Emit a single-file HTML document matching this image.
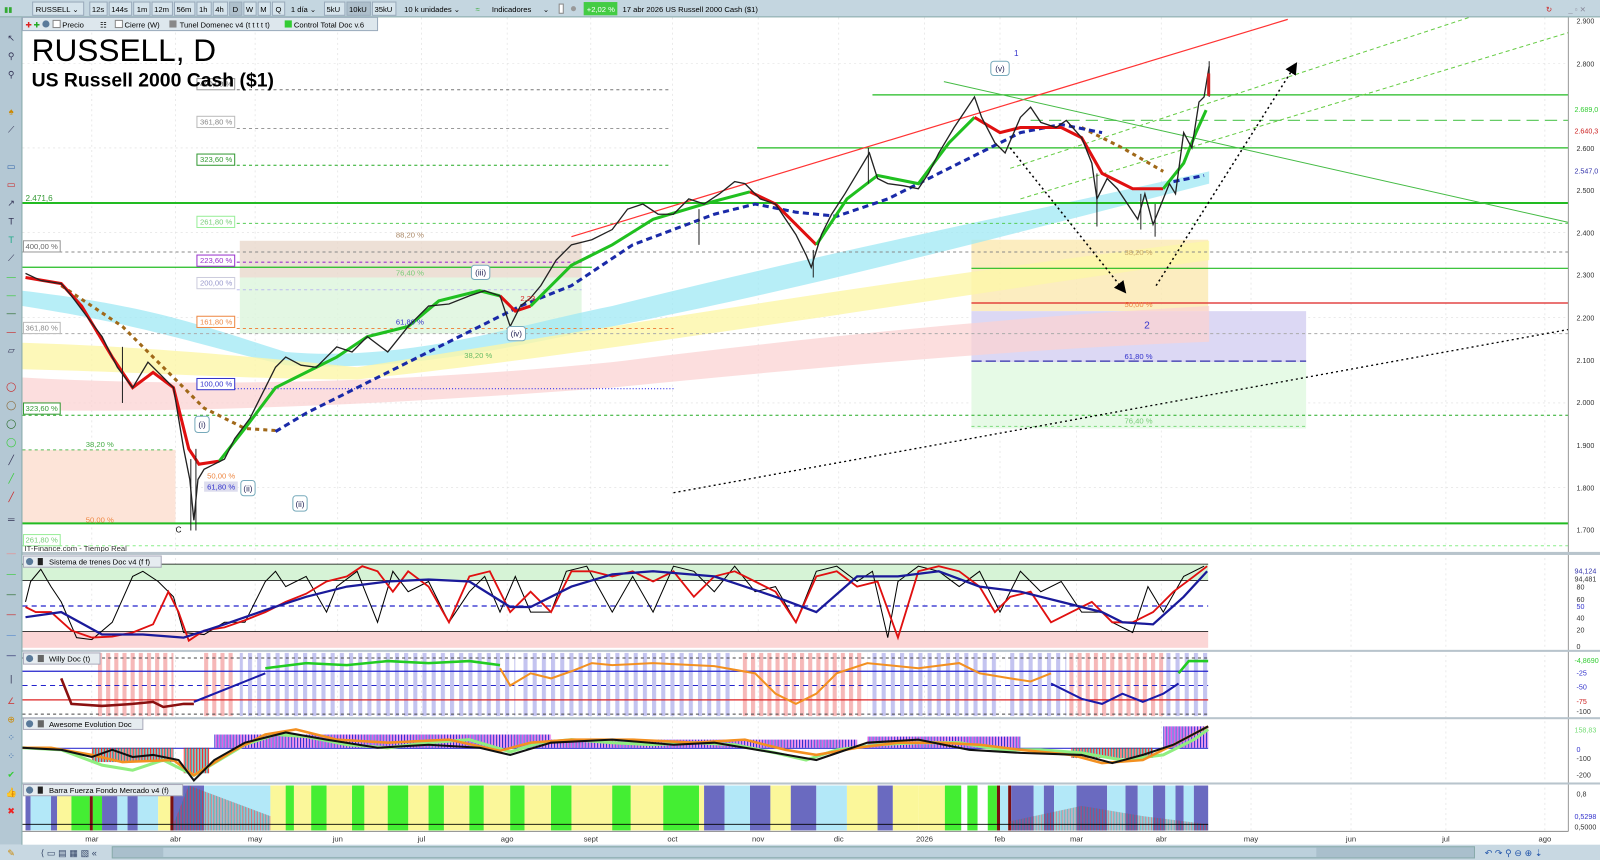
<!DOCTYPE html>
<html><head><meta charset="utf-8"><style>
html,body{margin:0;padding:0;background:#fff;overflow:hidden}
svg{display:block;font-family:"Liberation Sans",sans-serif}
</style></head><body>
<svg width="1600" height="860" viewBox="0 0 1568 843" preserveAspectRatio="none" xmlns="http://www.w3.org/2000/svg">
<defs>
<pattern id="wl" width="9" height="10" patternUnits="userSpaceOnUse"><rect x="0" width="4" height="10" fill="#c4c4f0"/></pattern>
<pattern id="wp" width="8" height="10" patternUnits="userSpaceOnUse"><rect x="0" width="4" height="10" fill="#f6b8b8"/></pattern>
<pattern id="hb" width="3" height="10" patternUnits="userSpaceOnUse"><rect width="1" height="10" fill="#2222cc"/><rect x="1.5" width="1" height="10" fill="#e040e0"/></pattern>
<pattern id="hr" width="3" height="10" patternUnits="userSpaceOnUse"><rect width="1" height="10" fill="#e22"/><rect x="1.5" width="1" height="10" fill="#188"/></pattern>
<marker id="ar" markerWidth="8" markerHeight="8" refX="4" refY="4" orient="auto"><path d="M0,0L8,4L0,8z" fill="#000"/></marker>
</defs>
<rect width="1568" height="843" fill="#fff"/>
<!-- grid -->
<g stroke="#ddd" stroke-dasharray="2,3" stroke-width="0.6">
<line x1="90" y1="17" x2="90" y2="815"/><line x1="172" y1="17" x2="172" y2="815"/><line x1="250" y1="17" x2="250" y2="815"/><line x1="331" y1="17" x2="331" y2="815"/><line x1="413" y1="17" x2="413" y2="815"/><line x1="497" y1="17" x2="497" y2="815"/><line x1="579" y1="17" x2="579" y2="815"/><line x1="659" y1="17" x2="659" y2="815"/><line x1="743" y1="17" x2="743" y2="815"/><line x1="822" y1="17" x2="822" y2="815"/><line x1="906" y1="17" x2="906" y2="815"/><line x1="980" y1="17" x2="980" y2="815"/><line x1="1055" y1="17" x2="1055" y2="815"/><line x1="1138" y1="17" x2="1138" y2="815"/><line x1="1226" y1="17" x2="1226" y2="815"/><line x1="1324" y1="17" x2="1324" y2="815"/><line x1="1417" y1="17" x2="1417" y2="815"/><line x1="1514" y1="17" x2="1514" y2="815"/>
<line x1="22" y1="62" x2="1537" y2="62"/><line x1="22" y1="145" x2="1537" y2="145"/><line x1="22" y1="228" x2="1537" y2="228"/><line x1="22" y1="311" x2="1537" y2="311"/><line x1="22" y1="395" x2="1537" y2="395"/><line x1="22" y1="478" x2="1537" y2="478"/>
</g>
<!-- fib boxes -->
<rect x="235" y="236" width="335" height="36" fill="#e8d8cc" opacity="0.8"/>
<rect x="235" y="272" width="335" height="55" fill="#dcf5dc" opacity="0.8"/>
<rect x="952" y="235" width="232" height="70" fill="#fbe8b0" opacity="0.8"/>
<rect x="952" y="305" width="328" height="50" fill="#dcd8f4"/>
<rect x="952" y="355" width="328" height="65" fill="#e6fae6"/>
<rect x="22" y="441" width="150" height="72" fill="#fde4d8"/>
<!-- bands -->
<path d="M22,285 C150,300 200,320 280,345 C400,355 500,320 600,300 C800,250 950,220 1185,168 L1185,180 C950,240 800,280 600,320 C500,340 400,365 280,358 C200,340 150,320 22,300z" fill="#9fe8f4" opacity="0.75"/>
<path d="M22,336 C150,340 250,350 350,360 C600,320 900,270 1185,236 L1185,255 C900,295 600,345 350,372 C250,372 150,365 22,362z" fill="#fdf6a8" opacity="0.8"/>
<path d="M22,370 C200,380 400,375 600,355 C800,330 1000,310 1185,300 L1185,335 C1000,342 800,360 600,380 C400,395 200,405 22,402z" fill="#fbd3d3" opacity="0.75"/>
<!-- horizontal levels -->
<g stroke-width="1.2">
<line x1="22" y1="199" x2="1537" y2="199" stroke="#22bb22" stroke-width="2"/>
<line x1="22" y1="513" x2="1537" y2="513" stroke="#22bb22" stroke-width="2"/>
<line x1="855" y1="93" x2="1537" y2="93" stroke="#22bb22"/>
<line x1="742" y1="145" x2="1537" y2="145" stroke="#22bb22"/>
<line x1="952" y1="263" x2="1537" y2="263" stroke="#22bb22"/>
<line x1="22" y1="262" x2="580" y2="262" stroke="#22bb22"/>
<line x1="952" y1="297" x2="1537" y2="297" stroke="#dd2222"/>
<line x1="1010" y1="118" x2="1537" y2="118" stroke="#66cc66" stroke-dasharray="12,6"/>
<line x1="952" y1="354" x2="1280" y2="354" stroke="#3333aa" stroke-dasharray="10,4"/>
</g>
<g stroke-dasharray="3,3" stroke-width="1">
<line x1="232" y1="88" x2="658" y2="88" stroke="#777"/>
<line x1="232" y1="126" x2="658" y2="126" stroke="#999"/>
<line x1="232" y1="162" x2="658" y2="162" stroke="#22aa22"/>
<line x1="232" y1="219" x2="1537" y2="219" stroke="#55cc55"/>
<line x1="22" y1="247" x2="1537" y2="247" stroke="#888"/>
<line x1="232" y1="257" x2="570" y2="257" stroke="#9933cc"/>
<line x1="232" y1="284" x2="570" y2="284" stroke="#bbbbee"/>
<line x1="232" y1="322" x2="660" y2="322" stroke="#ee8844"/>
<line x1="22" y1="327" x2="1537" y2="327" stroke="#aaa"/>
<line x1="22" y1="407" x2="1537" y2="407" stroke="#22aa22"/>
<line x1="200" y1="381" x2="660" y2="381" stroke="#3333ee" stroke-dasharray="1,2"/>
<line x1="22" y1="441" x2="172" y2="441" stroke="#55bb55"/>
<line x1="22" y1="535" x2="1537" y2="535" stroke="#88ee88"/>
<line x1="952" y1="418" x2="1280" y2="418" stroke="#88dd88"/>
</g>
<!-- trend lines -->
<line x1="560" y1="232" x2="1262" y2="19" stroke="#ff3333" stroke-width="1.2"/>
<line x1="925" y1="80" x2="1537" y2="218" stroke="#44bb44" stroke-width="1"/>
<line x1="990" y1="165" x2="1440" y2="17" stroke="#66cc44" stroke-dasharray="4,3"/>
<line x1="1000" y1="195" x2="1537" y2="32" stroke="#66cc44" stroke-dasharray="4,3"/>
<line x1="660" y1="483" x2="1537" y2="323" stroke="#000" stroke-dasharray="2,3" stroke-width="1.3"/>
<line x1="990" y1="145" x2="1100" y2="283" stroke="#000" stroke-dasharray="2,3" stroke-width="1.5" marker-end="url(#ar)"/>
<line x1="1133" y1="280" x2="1268" y2="66" stroke="#000" stroke-dasharray="2,3" stroke-width="1.5" marker-end="url(#ar)"/>
<!-- MAs -->
<polyline fill="none" stroke="#a06818" stroke-width="3" stroke-dasharray="4,4" points="60,280 120,320 170,370 200,400 240,420 270,422"/>
<polyline fill="none" stroke="#a06818" stroke-width="3" stroke-dasharray="4,4" points="1060,125 1100,145 1140,168"/>
<polyline fill="none" stroke="#1a2aa8" stroke-width="3" stroke-dasharray="6,4" points="270,423 300,405 340,385 380,365 420,345 470,320 510,300 560,280 620,240 700,210 740,200 780,208 820,212 870,195 920,170 960,150 1000,130 1040,122 1080,130"/>
<polyline fill="none" stroke="#1a2aa8" stroke-width="3" stroke-dasharray="6,4" points="1150,178 1180,172"/>
<polyline fill="none" stroke="#e01010" stroke-width="3" points="25,272 60,278 80,300 110,350 130,380 150,365 170,380 185,440 195,455 215,452"/>
<polyline fill="none" stroke="#20c020" stroke-width="3" points="215,452 240,420 270,380 300,365 330,350 360,330 400,320 430,295 470,285 490,290"/>
<polyline fill="none" stroke="#e01010" stroke-width="3" points="490,290 505,305 520,300"/>
<polyline fill="none" stroke="#20c020" stroke-width="3" points="520,300 560,260 600,240 640,215 690,200 735,188"/>
<polyline fill="none" stroke="#e01010" stroke-width="3" points="735,188 760,200 785,225 800,240"/>
<polyline fill="none" stroke="#20c020" stroke-width="3" points="800,240 830,195 860,172 900,180 930,140 955,115"/>
<polyline fill="none" stroke="#e01010" stroke-width="3" points="955,115 980,130 1000,125 1040,125 1060,135 1080,170 1110,185 1140,185"/>
<polyline fill="none" stroke="#20c020" stroke-width="3" points="1140,185 1160,160 1172,130 1182,108"/>
<!-- price -->
<polyline fill="none" stroke="#222" stroke-width="1.3" points="25,268 40,275 60,278 70,290 85,310 100,330 115,360 130,380 145,355 160,370 170,380 180,440 186,470 190,510 194,470 200,460 210,455 220,450 230,430 245,410 260,380 270,360 280,350 295,358 310,360 320,350 330,340 345,345 360,330 380,345 400,320 420,300 440,298 460,290 475,285 490,290 500,320 510,300 520,292 530,280 545,255 560,240 580,235 600,225 615,205 630,200 645,210 660,210 675,195 690,200 705,190 720,178 730,180 745,195 760,200 770,215 780,230 790,250 795,262 805,230 815,210 828,190 840,170 852,150 860,175 870,180 885,182 900,185 910,170 920,150 935,125 945,110 955,95 962,115 975,140 985,150 1000,115 1010,105 1020,120 1035,125 1045,118 1060,135 1070,160 1075,195 1085,175 1095,185 1105,200 1115,215 1122,190 1130,220 1138,200 1146,180 1152,190 1160,130 1168,145 1175,100 1180,95 1185,65"/>
<g stroke="#222" stroke-width="1">
<line x1="120" y1="340" x2="120" y2="395"/><line x1="187" y1="450" x2="187" y2="520"/><line x1="192" y1="440" x2="192" y2="520"/><line x1="685" y1="205" x2="685" y2="240"/><line x1="797" y1="245" x2="797" y2="272"/><line x1="1075" y1="170" x2="1075" y2="222"/><line x1="1118" y1="190" x2="1118" y2="225"/><line x1="1132" y1="200" x2="1132" y2="232"/><line x1="851" y1="145" x2="851" y2="180"/><line x1="1185" y1="60" x2="1185" y2="95"/>
</g>
<rect x="1183" y="72" width="3" height="22" fill="#c22"/>
<!-- wave labels -->
<g font-size="8" fill="#225" text-anchor="middle">
<rect x="971" y="60" width="18" height="14" rx="3" fill="#fff" stroke="#7ab"/><text x="980" y="70">(v)</text>
<text x="996" y="55" fill="#33c">1</text>
<text x="1124" y="322" font-size="10" fill="#33c">2</text>
<rect x="462" y="260" width="18" height="14" rx="3" fill="#fff" stroke="#7ab"/><text x="471" y="270">(iii)</text>
<rect x="497" y="320" width="18" height="14" rx="3" fill="#fff" stroke="#7ab"/><text x="506" y="330">(iv)</text>
<rect x="191" y="408" width="14" height="16" rx="3" fill="#fff" stroke="#7ab"/><text x="198" y="419">(i)</text>
<rect x="236" y="471" width="14" height="15" rx="3" fill="#fff" stroke="#7ab"/><text x="243" y="482">(ii)</text>
<rect x="287" y="486" width="14" height="15" rx="3" fill="#fff" stroke="#7ab"/><text x="294" y="497">(ii)</text>
<text x="175" y="522" fill="#000">C</text>
</g>
<!-- fib labels -->
<g font-size="7.5">
<rect x="193" y="77" width="37" height="11" fill="#fff" stroke="#999"/><text x="196" y="85" fill="#666">400,00 %</text>
<rect x="193" y="114" width="37" height="11" fill="#fff" stroke="#bbb"/><text x="196" y="122" fill="#888">361,80 %</text>
<rect x="193" y="151" width="37" height="11" fill="#fff" stroke="#393"/><text x="196" y="159" fill="#393">323,60 %</text>
<rect x="193" y="212" width="37" height="11" fill="#fff" stroke="#9e9"/><text x="196" y="220" fill="#7c7">261,80 %</text>
<rect x="193" y="250" width="37" height="11" fill="#fff" stroke="#93c"/><text x="196" y="258" fill="#93c">223,60 %</text>
<rect x="193" y="272" width="37" height="11" fill="#fff" stroke="#ccd"/><text x="196" y="280" fill="#99c">200,00 %</text>
<rect x="193" y="310" width="37" height="11" fill="#fff" stroke="#e84"/><text x="196" y="318" fill="#e84">161,80 %</text>
<rect x="193" y="371" width="37" height="11" fill="#fff" stroke="#33c"/><text x="196" y="379" fill="#33c">100,00 %</text>
<rect x="23" y="236" width="36" height="11" fill="#fff" stroke="#999"/><text x="25" y="244" fill="#666">400,00 %</text>
<rect x="23" y="316" width="36" height="11" fill="#fff" stroke="#bbb"/><text x="25" y="324" fill="#888">361,80 %</text>
<rect x="23" y="395" width="36" height="11" fill="#fff" stroke="#393"/><text x="25" y="403" fill="#393">323,60 %</text>
<rect x="23" y="524" width="36" height="11" fill="#fff" stroke="#9e9"/><text x="25" y="532" fill="#7c7">261,80 %</text>
<text x="25" y="197" fill="#393" font-size="8">2.471,6</text>
<text x="388" y="233" fill="#a86">88,20 %</text><text x="388" y="270" fill="#7c7">76,40 %</text>
<text x="455" y="351" fill="#6b6">38,20 %</text><text x="1102" y="250" fill="#ca6">38,20 %</text>
<text x="1102" y="301" fill="#e84">50,00 %</text><text x="1102" y="352" fill="#33c">61,80 %</text>
<text x="1102" y="415" fill="#7c7">76,40 %</text><text x="84" y="438" fill="#4a4">38,20 %</text>
<text x="84" y="512" fill="#e84">50,00 %</text><text x="203" y="469" fill="#e84">50,00 %</text>
<rect x="200" y="472" width="33" height="10" fill="#dde"/><text x="203" y="480" fill="#33c">61,80 %</text>
<text x="388" y="318" fill="#33c">61,80 %</text><text x="510" y="295" fill="#d22">2.23</text>
<text x="24" y="540" fill="#333" font-size="7.5">IT-Finance.com - Tiempo Real</text>
</g>
<!-- title -->
<text x="31" y="60" font-size="31" fill="#000">RUSSELL, D</text>
<text x="31" y="85" font-size="19" font-weight="bold" fill="#000">US Russell 2000 Cash ($1)</text>
<!-- right axis -->
<rect x="1537" y="17" width="31" height="826" fill="#fff"/>
<line x1="1537" y1="17" x2="1537" y2="815" stroke="#999"/>
<g font-size="7" fill="#333">
<text x="1545" y="23">2.900</text><text x="1545" y="65">2.800</text><text x="1545" y="148">2.600</text><text x="1545" y="189">2.500</text><text x="1545" y="231">2.400</text><text x="1545" y="272">2.300</text><text x="1545" y="314">2.200</text><text x="1545" y="356">2.100</text><text x="1545" y="397">2.000</text><text x="1545" y="439">1.900</text><text x="1545" y="481">1.800</text><text x="1545" y="522">1.700</text>
<text x="1543" y="110" fill="#3c3">2.689,0</text><text x="1543" y="131" fill="#c22">2.640,3</text><text x="1543" y="170" fill="#33a">2.547,0</text>
<text x="1543" y="562" fill="#33a">94,124</text><text x="1543" y="570">94,481</text><text x="1545" y="578">80</text><text x="1545" y="590">60</text><text x="1545" y="597" fill="#33c">50</text><text x="1545" y="608">40</text><text x="1545" y="620">20</text><text x="1545" y="636">0</text>
<text x="1543" y="650" fill="#3c3">-4,8690</text><text x="1545" y="662" fill="#33c">-25</text><text x="1545" y="676" fill="#33c">-50</text><text x="1545" y="690" fill="#c22">-75</text><text x="1545" y="700">-100</text>
<text x="1543" y="718" fill="#7d7">158,83</text><text x="1545" y="737" fill="#33c">0</text><text x="1545" y="746">-100</text><text x="1545" y="762">-200</text>
<text x="1545" y="781">0,8</text><text x="1543" y="803" fill="#33c">0,5298</text><text x="1543" y="813">0,5000</text>
</g>
<!-- separators -->
<g fill="#b8c4cc"><rect x="22" y="541" width="1546" height="3"/><rect x="22" y="637" width="1546" height="2"/><rect x="22" y="703" width="1546" height="2"/><rect x="22" y="767" width="1546" height="2"/></g>
<!-- trenes panel -->
<rect x="22" y="553" width="1162" height="16" fill="#d6f3d6"/><rect x="22" y="619" width="1162" height="16" fill="#fbd6d6"/>
<line x1="22" y1="553" x2="1184" y2="553" stroke="#000" stroke-width="0.8"/><line x1="22" y1="569" x2="1184" y2="569" stroke="#000" stroke-width="0.8"/><line x1="22" y1="619" x2="1184" y2="619" stroke="#000" stroke-width="0.8"/>
<line x1="22" y1="594" x2="1184" y2="594" stroke="#22c" stroke-dasharray="5,4" stroke-width="1.2"/>
<polyline fill="none" stroke="#000" stroke-width="1" points="25,590 30,570 40,558 50,575 60,590 75,625 90,627 110,610 130,565 140,560 155,570 170,585 180,620 200,622 220,610 240,610 260,570 270,560 280,575 300,565 320,600 330,575 350,560 370,610 385,560 400,580 420,570 440,610 460,580 475,565 490,600 505,565 520,600 540,600 555,560 575,555 600,600 620,565 640,600 660,555 680,560 700,580 720,555 740,580 760,575 780,610 800,560 820,555 840,570 855,560 870,625 880,570 900,555 920,560 940,575 960,560 980,600 1000,560 1020,580 1040,570 1060,600 1080,600 1090,610 1110,620 1125,575 1140,600 1160,565 1180,555"/>
<polyline fill="none" stroke="#e01010" stroke-width="1.8" points="25,595 35,600 50,600 70,618 90,625 110,624 130,620 150,612 165,580 175,600 185,628 200,618 220,615 240,608 260,600 280,590 300,582 320,570 340,565 355,555 370,560 385,580 400,560 420,575 440,610 460,565 480,560 500,600 520,580 540,600 560,560 580,560 600,565 620,560 640,570 660,560 680,585 700,565 720,560 740,570 760,580 780,610 800,565 820,560 840,575 860,570 880,625 900,560 920,555 940,560 960,575 975,600 990,585 1010,580 1030,610 1050,600 1070,590 1090,610 1110,610 1130,600 1150,580 1170,565 1183,555"/>
<polyline fill="none" stroke="#1a1a9a" stroke-width="2.2" points="25,605 60,600 100,622 140,622 180,625 220,612 260,598 300,585 340,575 380,570 420,568 460,570 500,595 520,595 560,575 600,563 640,560 700,565 760,585 800,600 840,565 880,565 920,560 960,575 1000,580 1040,590 1080,600 1100,610 1130,612 1160,585 1183,560"/>
<!-- willy panel -->
<rect x="95" y="640" width="75" height="62" fill="url(#wp)"/><rect x="200" y="640" width="30" height="62" fill="url(#wp)"/>
<rect x="235" y="640" width="270" height="62" fill="url(#wl)"/><rect x="510" y="640" width="210" height="62" fill="url(#wl)"/><rect x="725" y="640" width="120" height="62" fill="url(#wp)"/><rect x="850" y="640" width="130" height="62" fill="url(#wl)"/><rect x="985" y="640" width="60" height="62" fill="url(#wl)"/><rect x="1045" y="640" width="95" height="62" fill="url(#wp)"/><rect x="1140" y="640" width="44" height="62" fill="url(#wl)"/>
<line x1="22" y1="645" x2="1184" y2="645" stroke="#444" stroke-dasharray="3,3"/><line x1="22" y1="700" x2="1184" y2="700" stroke="#444" stroke-dasharray="3,3"/>
<line x1="22" y1="658" x2="1184" y2="658" stroke="#22c" stroke-width="1.2"/><line x1="22" y1="672" x2="1184" y2="672" stroke="#22c" stroke-dasharray="5,4"/><line x1="22" y1="686" x2="1184" y2="686" stroke="#d22" stroke-width="1.2"/>
<polyline fill="none" stroke="#8a1010" stroke-width="2.5" points="60,665 70,690 100,692 130,690 150,688 160,693 180,690 190,690"/>
<polyline fill="none" stroke="#1a1aaa" stroke-width="2" points="190,688 230,672 260,660"/>
<polyline fill="none" stroke="#22cc22" stroke-width="2.5" points="260,655 300,650 340,652 380,648 420,650 460,648 490,652"/>
<polyline fill="none" stroke="#f39020" stroke-width="2" points="490,655 500,672 520,660 540,665 560,658 580,650 600,652 640,650 700,653 740,660 760,680 780,690 800,680 820,660 850,650 900,655 940,650 960,660 990,665 1010,668 1030,660"/>
<polyline fill="none" stroke="#1a1aaa" stroke-width="2" points="1030,670 1060,685 1080,690 1100,680 1120,688 1140,680 1155,670"/>
<polyline fill="none" stroke="#22cc22" stroke-width="2.5" points="1155,660 1165,648 1184,648"/>
<!-- awesome -->
<rect x="40" y="733" width="1144" height="1" fill="#22c"/>
<rect x="90" y="733" width="80" height="14" fill="url(#hr)"/><rect x="180" y="733" width="25" height="25" fill="url(#hr)"/><rect x="210" y="720" width="330" height="13" fill="url(#hb)"/><rect x="540" y="725" width="300" height="8" fill="url(#hb)"/><rect x="850" y="722" width="150" height="11" fill="url(#hb)"/><rect x="1050" y="733" width="80" height="10" fill="url(#hr)"/><rect x="1140" y="712" width="44" height="21" fill="url(#hb)"/>
<polyline fill="none" stroke="#90ee80" stroke-width="3" points="22,733 60,735 100,750 130,755 160,745 190,760 210,748 240,730 270,720 300,722 340,730 380,733 420,728 460,725 500,737 530,728 560,725 600,728 640,730 680,728 720,730 760,738 790,745 820,735 860,730 900,728 940,728 980,735 1020,735 1060,738 1100,745 1140,740 1170,725 1184,715"/>
<polyline fill="none" stroke="#f39020" stroke-width="2.5" points="22,733 50,733 90,740 120,747 170,745 190,760 230,735 260,720 290,715 330,725 380,728 440,725 490,736 520,728 560,725 620,725 680,728 730,725 770,735 800,740 840,733 880,728 920,728 960,730 1000,735 1050,740 1080,748 1120,745 1150,730 1184,712"/>
<polyline fill="none" stroke="#111" stroke-width="2" points="22,733 60,735 90,742 110,735 130,742 150,740 175,745 190,765 210,745 240,728 280,718 320,725 370,733 420,730 470,733 500,740 540,728 600,725 660,730 700,728 760,738 800,745 850,728 900,725 950,735 1000,738 1060,740 1090,748 1120,740 1150,730 1184,712"/>
<!-- barra -->
<g>
<rect x="25" y="770" width="5" height="44" fill="#6a6ac0"/><rect x="30" y="770" width="20" height="44" fill="#b3e8f8"/><rect x="50" y="770" width="6" height="44" fill="#6a6ac0"/><rect x="56" y="770" width="14" height="44" fill="#fbf79a"/><rect x="70" y="770" width="18" height="44" fill="#44ee33"/><rect x="88" y="770" width="3" height="44" fill="#7a1010"/><rect x="91" y="770" width="9" height="44" fill="#44ee33"/><rect x="100" y="770" width="15" height="44" fill="#6a6ac0"/><rect x="115" y="770" width="10" height="44" fill="#b3e8f8"/><rect x="125" y="770" width="10" height="44" fill="#6a6ac0"/><rect x="135" y="770" width="20" height="44" fill="#b3e8f8"/><rect x="155" y="770" width="12" height="44" fill="#fbf79a"/><rect x="167" y="770" width="3" height="44" fill="#7a1010"/><rect x="170" y="770" width="30" height="44" fill="#6a6ac0"/><rect x="200" y="770" width="65" height="44" fill="#b3e8f8"/>
<rect x="265" y="770" width="425" height="44" fill="#fbf79a"/>
<rect x="280" y="770" width="8" height="44" fill="#44ee33"/><rect x="305" y="770" width="15" height="44" fill="#44ee33"/><rect x="345" y="770" width="12" height="44" fill="#44ee33"/><rect x="380" y="770" width="20" height="44" fill="#44ee33"/><rect x="420" y="770" width="15" height="44" fill="#44ee33"/><rect x="460" y="770" width="14" height="44" fill="#44ee33"/><rect x="500" y="770" width="14" height="44" fill="#44ee33"/><rect x="540" y="770" width="20" height="44" fill="#44ee33"/><rect x="600" y="770" width="18" height="44" fill="#44ee33"/><rect x="650" y="770" width="35" height="44" fill="#44ee33"/>
<rect x="690" y="770" width="20" height="44" fill="#6a6ac0"/><rect x="710" y="770" width="25" height="44" fill="#b3e8f8"/><rect x="735" y="770" width="20" height="44" fill="#6a6ac0"/><rect x="755" y="770" width="20" height="44" fill="#fbf79a"/><rect x="775" y="770" width="25" height="44" fill="#6a6ac0"/><rect x="800" y="770" width="30" height="44" fill="#b3e8f8"/><rect x="830" y="770" width="30" height="44" fill="#fbf79a"/><rect x="860" y="770" width="15" height="44" fill="#6a6ac0"/><rect x="875" y="770" width="25" height="44" fill="#fbf79a"/><rect x="900" y="770" width="30" height="44" fill="#fbf79a"/><rect x="926" y="770" width="16" height="44" fill="#44ee33"/><rect x="948" y="770" width="10" height="44" fill="#44ee33"/><rect x="968" y="770" width="9" height="44" fill="#44ee33"/><rect x="977" y="770" width="3" height="44" fill="#7a1010"/><rect x="980" y="770" width="8" height="44" fill="#b3e8f8"/><rect x="988" y="770" width="3" height="44" fill="#7a1010"/><rect x="991" y="770" width="22" height="44" fill="#6a6ac0"/><rect x="1013" y="770" width="10" height="44" fill="#b3e8f8"/><rect x="1023" y="770" width="10" height="44" fill="#6a6ac0"/><rect x="1033" y="770" width="22" height="44" fill="#b3e8f8"/><rect x="1055" y="770" width="30" height="44" fill="#6a6ac0"/><rect x="1085" y="770" width="18" height="44" fill="#b3e8f8"/><rect x="1103" y="770" width="12" height="44" fill="#6a6ac0"/><rect x="1115" y="770" width="15" height="44" fill="#b3e8f8"/><rect x="1130" y="770" width="12" height="44" fill="#6a6ac0"/><rect x="1142" y="770" width="10" height="44" fill="#b3e8f8"/><rect x="1152" y="770" width="8" height="44" fill="#6a6ac0"/><rect x="1160" y="770" width="10" height="44" fill="#b3e8f8"/><rect x="1170" y="770" width="14" height="44" fill="#6a6ac0"/>
</g>
<path d="M170,808 L185,770 L265,800 L265,814 L170,814z" fill="url(#hr)" opacity="0.6"/>
<path d="M990,805 L1060,790 L1120,800 L1184,808 L1184,814 L990,814z" fill="url(#hr)" opacity="0.5"/>
<line x1="22" y1="808" x2="1184" y2="808" stroke="#000" stroke-width="0.8"/>
<!-- panel headers -->
<g font-size="7.5" fill="#000">
<rect x="23" y="545" width="135" height="11" fill="#e6ecf0" stroke="#aab"/><circle cx="29" cy="550.5" r="3.5" fill="#5a7a9a"/><rect x="37" y="547" width="5" height="7" fill="#222"/><text x="48" y="553.5">Sistema de trenes Doc v4 (f f)</text>
<rect x="23" y="640" width="75" height="11" fill="#e6ecf0" stroke="#aab"/><circle cx="29" cy="645.5" r="3.5" fill="#5a7a9a"/><rect x="37" y="642" width="6" height="7" fill="#666"/><text x="48" y="648.5">Willy Doc (t)</text>
<rect x="23" y="704" width="117" height="11" fill="#e6ecf0" stroke="#aab"/><circle cx="29" cy="709.5" r="3.5" fill="#5a7a9a"/><rect x="37" y="706" width="6" height="7" fill="#666"/><text x="48" y="712.5">Awesome Evolution Doc</text>
<rect x="23" y="769" width="156" height="11" fill="#e6ecf0" stroke="#aab"/><circle cx="29" cy="774.5" r="3.5" fill="#5a7a9a"/><rect x="37" y="771" width="5" height="7" fill="#222"/><text x="48" y="777.5">Barra Fuerza Fondo Mercado v4 (f)</text>
</g>
<!-- x axis -->
<rect x="22" y="815" width="1515" height="13" fill="#fff"/><line x1="22" y1="815" x2="1537" y2="815" stroke="#999"/>
<g font-size="7.5" fill="#333" text-anchor="middle"><text x="90" y="825">mar</text><text x="172" y="825">abr</text><text x="250" y="825">may</text><text x="331" y="825">jun</text><text x="413" y="825">jul</text><text x="497" y="825">ago</text><text x="579" y="825">sept</text><text x="659" y="825">oct</text><text x="743" y="825">nov</text><text x="822" y="825">dic</text><text x="906" y="825">2026</text><text x="980" y="825">feb</text><text x="1055" y="825">mar</text><text x="1138" y="825">abr</text><text x="1226" y="825">may</text><text x="1324" y="825">jun</text><text x="1417" y="825">jul</text><text x="1514" y="825">ago</text></g>
<!-- bottom bar -->
<rect x="0" y="828" width="1568" height="15" fill="#c8d8e2"/>
<rect x="110" y="830" width="1335" height="11" fill="#a9bfcc" stroke="#8aa"/><rect x="160" y="831" width="1130" height="9" fill="#bcd0dc"/>
<g font-size="9" fill="#346"><text x="40" y="839">⟨ ▭ ▤ ▦ ▧ «</text><text x="1455" y="839" fill="#25a">↶ ↷ ⚲ ⊖ ⊕ ⇣</text></g>
<!-- left toolbar -->
<rect x="0" y="17" width="22" height="811" fill="#b4c8d4"/><line x1="21.5" y1="17" x2="21.5" y2="828" stroke="#8aa"/>
<g font-size="9" fill="#335" text-anchor="middle">
<text x="11" y="40">↖</text><text x="11" y="58">⚲</text><text x="11" y="76">⚲</text><text x="11" y="112" fill="#c80">♠</text><text x="11" y="130">⟋</text><text x="11" y="166" fill="#36a">▭</text><text x="11" y="184" fill="#c22">▭</text><text x="11" y="202">↗</text><text x="11" y="220">T</text><text x="11" y="238" fill="#2a8">T</text><text x="11" y="256">⟋</text><text x="11" y="274" fill="#3c3">—</text><text x="11" y="292" fill="#3c3">—</text><text x="11" y="310" fill="#262">—</text><text x="11" y="328" fill="#c22">—</text><text x="11" y="346">▱</text><text x="11" y="382" fill="#c22">◯</text><text x="11" y="400" fill="#863">◯</text><text x="11" y="418" fill="#262">◯</text><text x="11" y="436" fill="#3c3">◯</text><text x="11" y="454">╱</text><text x="11" y="472" fill="#3c3">╱</text><text x="11" y="490" fill="#c22">╱</text><text x="11" y="512">═</text><text x="11" y="545" fill="#e88">—</text><text x="11" y="565" fill="#3c3">—</text><text x="11" y="585" fill="#262">—</text><text x="11" y="605" fill="#c22">—</text><text x="11" y="625" fill="#58c">—</text><text x="11" y="645" fill="#226">—</text><text x="11" y="668">|</text><text x="11" y="690" fill="#c44">∠</text><text x="11" y="708" fill="#c80">⊕</text><text x="11" y="726" fill="#36a">⁘</text><text x="11" y="744" fill="#36a">⁘</text><text x="11" y="762" fill="#3c3">✔</text><text x="11" y="780" fill="#3c3">👍</text><text x="11" y="798" fill="#e22">✖</text><text x="11" y="839" fill="#c80">✎</text>
</g>
<!-- top toolbar -->
<rect x="0" y="0" width="1568" height="17" fill="#c4d6e0"/><line x1="0" y1="16.5" x2="1568" y2="16.5" stroke="#8aa"/>
<g font-size="7.5" fill="#000">
<text x="4" y="12" fill="#3a3">▮▮</text>
<rect x="32" y="2" width="50" height="13" fill="#d6e4ec" stroke="#9ab"/><text x="35" y="12">RUSSELL ⌄</text>
<rect x="88" y="2" width="17" height="13" fill="#d6e4ec" stroke="#9ab"/><text x="90" y="12">12s</text>
<rect x="107" y="2" width="22" height="13" fill="#d6e4ec" stroke="#9ab"/><text x="109" y="12">144s</text>
<rect x="131" y="2" width="16" height="13" fill="#d6e4ec" stroke="#9ab"/><text x="134" y="12">1m</text>
<rect x="149" y="2" width="20" height="13" fill="#d6e4ec" stroke="#9ab"/><text x="151" y="12">12m</text>
<rect x="171" y="2" width="20" height="13" fill="#d6e4ec" stroke="#9ab"/><text x="173" y="12">56m</text>
<rect x="193" y="2" width="14" height="13" fill="#d6e4ec" stroke="#9ab"/><text x="195" y="12">1h</text>
<rect x="209" y="2" width="14" height="13" fill="#d6e4ec" stroke="#9ab"/><text x="211" y="12">4h</text>
<rect x="225" y="2" width="12" height="13" fill="#aebfcb" stroke="#9ab"/><text x="228" y="12">D</text>
<rect x="239" y="2" width="12" height="13" fill="#d6e4ec" stroke="#9ab"/><text x="241" y="12">W</text>
<rect x="253" y="2" width="12" height="13" fill="#d6e4ec" stroke="#9ab"/><text x="255" y="12">M</text>
<rect x="267" y="2" width="12" height="13" fill="#d6e4ec" stroke="#9ab"/><text x="270" y="12">Q</text>
<text x="285" y="12">1 día ⌄</text>
<rect x="318" y="2" width="20" height="13" fill="#d6e4ec" stroke="#9ab"/><text x="320" y="12">5kU</text>
<rect x="340" y="2" width="23" height="13" fill="#aebfcb" stroke="#9ab"/><text x="342" y="12">10kU</text>
<rect x="365" y="2" width="23" height="13" fill="#d6e4ec" stroke="#9ab"/><text x="367" y="12">35kU</text>
<text x="396" y="12">10 k unidades ⌄</text>
<text x="466" y="12" fill="#3a3">≈</text><text x="482" y="12">Indicadores</text><text x="532" y="12">⌄</text>
<rect x="548" y="4" width="4" height="9" fill="#fff" stroke="#888"/><circle cx="562" cy="8.5" r="2.5" fill="#999"/>
<rect x="572" y="2" width="33" height="13" fill="#44cc44"/><text x="575" y="12" fill="#fff">+2,02 %</text>
<text x="610" y="12">17 abr 2026  US Russell 2000 Cash ($1)</text>
<text x="1515" y="12" fill="#c22">↻</text><text x="1537" y="12" fill="#889">_ ▫ ✕</text>
</g>
<!-- secondary tab row -->
<g font-size="7.5">
<rect x="22" y="17" width="348" height="13" fill="#dde7ed" stroke="#9ab"/>
<text x="25" y="27" fill="#d22">✚</text><text x="33" y="27" fill="#2a2">✚</text><circle cx="45" cy="23.5" r="3.5" fill="#5a7a9a"/>
<rect x="52" y="20" width="7" height="7" fill="#fff" stroke="#888"/><text x="61" y="27">Precio</text>
<text x="98" y="27">☷</text><rect x="113" y="20" width="7" height="7" fill="#fff" stroke="#888"/><text x="122" y="27">Cierre (W)</text>
<rect x="166" y="20" width="7" height="7" fill="#888"/><text x="176" y="27">Tunel Domenec v4 (t t t t t)</text>
<rect x="279" y="20" width="7" height="7" fill="#3c3"/><text x="288" y="27">Control Total Doc v.6</text>
</g>
</svg>
</body></html>
